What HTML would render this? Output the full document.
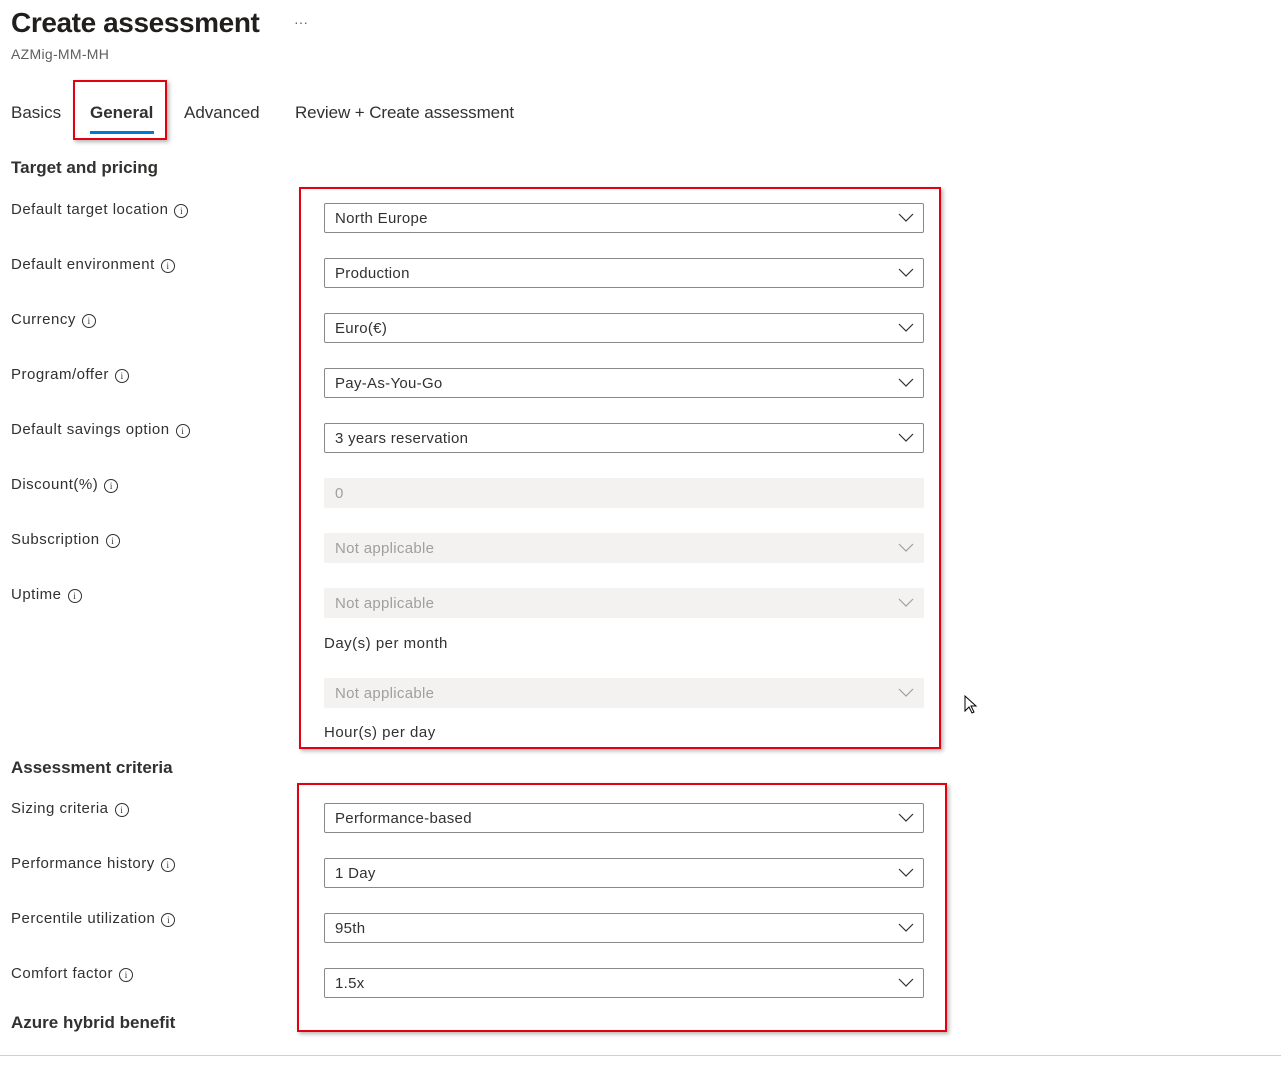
<!DOCTYPE html><html><head><style>
body{margin:0;width:1281px;height:1065px;background:#fff;font-family:"Liberation Sans",sans-serif;color:#323130;position:relative;overflow:hidden}
.a{position:absolute;white-space:nowrap}
.lbl{font-size:15px;letter-spacing:0.5px}
.i{display:inline-block;width:12px;height:12px;border:1px solid #323130;border-radius:50%;font-size:9px;line-height:12px;text-align:center;vertical-align:0px;margin-left:6px;font-family:"Liberation Serif",serif;letter-spacing:0}
.dd{position:absolute;left:324px;height:28px;border:1px solid #8a8886;border-radius:2px;font-size:15px;line-height:30px;padding-left:10px;box-sizing:content-box;width:588px;letter-spacing:0.3px}
.dd.dis{border-color:#f3f2f1;background:#f3f2f1;color:#a19f9d}
.dd svg{position:absolute;right:9px;top:9px}
.red{position:absolute;border:2px solid #e3000f;box-shadow:2px 2px 4px rgba(0,0,0,.3)}
h3{margin:0;font-size:17px;font-weight:bold;position:absolute}
</style></head><body>
<div class="a" style="left:11px;top:7px;font-size:28px;color:#201f1e;font-weight:bold;letter-spacing:-0.4px">Create assessment</div>
<div class="a" style="left:294px;top:14px;font-size:14px;color:#605e5c">···</div>
<div class="a" style="left:11px;top:46px;font-size:14px;color:#605e5c;letter-spacing:0.3px">AZMig-MM-MH</div>
<div class="a lbl" style="left:11px;top:103px;font-size:17px;letter-spacing:0">Basics</div>
<div class="a lbl" style="left:90px;top:103px;font-size:17px;font-weight:bold;letter-spacing:0">General</div>
<div style="position:absolute;left:90px;top:131px;width:64px;height:3px;background:#0078d4"></div>
<div class="red" style="left:73px;top:80px;width:90px;height:56px"></div>
<div class="a lbl" style="left:184px;top:103px;font-size:17px;letter-spacing:0">Advanced</div>
<div class="a lbl" style="left:295px;top:103px;font-size:17px;letter-spacing:-0.1px">Review + Create assessment</div>
<h3 style="left:11px;top:158px">Target and pricing</h3>
<div class="a lbl" style="left:11px;top:201px">Default target location<span class="i">i</span></div>
<div class="a lbl" style="left:11px;top:256px">Default environment<span class="i">i</span></div>
<div class="a lbl" style="left:11px;top:311px">Currency<span class="i">i</span></div>
<div class="a lbl" style="left:11px;top:366px">Program/offer<span class="i">i</span></div>
<div class="a lbl" style="left:11px;top:421px">Default savings option<span class="i">i</span></div>
<div class="a lbl" style="left:11px;top:476px">Discount(%)<span class="i">i</span></div>
<div class="a lbl" style="left:11px;top:531px">Subscription<span class="i">i</span></div>
<div class="a lbl" style="left:11px;top:586px">Uptime<span class="i">i</span></div>
<div class="red" style="left:299px;top:187px;width:638px;height:558px"></div>
<div class="dd" style="top:203px">North Europe<svg width="16" height="10"><path d="M1 1l7 7 7-7" fill="none" stroke="#323130" stroke-width="1.2"/></svg></div>
<div class="dd" style="top:258px">Production<svg width="16" height="10"><path d="M1 1l7 7 7-7" fill="none" stroke="#323130" stroke-width="1.2"/></svg></div>
<div class="dd" style="top:313px">Euro(€)<svg width="16" height="10"><path d="M1 1l7 7 7-7" fill="none" stroke="#323130" stroke-width="1.2"/></svg></div>
<div class="dd" style="top:368px">Pay-As-You-Go<svg width="16" height="10"><path d="M1 1l7 7 7-7" fill="none" stroke="#323130" stroke-width="1.2"/></svg></div>
<div class="dd" style="top:423px">3 years reservation<svg width="16" height="10"><path d="M1 1l7 7 7-7" fill="none" stroke="#323130" stroke-width="1.2"/></svg></div>
<div class="dd dis" style="top:478px">0</div>
<div class="dd dis" style="top:533px">Not applicable<svg width="16" height="10"><path d="M1 1l7 7 7-7" fill="none" stroke="#a19f9d" stroke-width="1.2"/></svg></div>
<div class="dd dis" style="top:588px">Not applicable<svg width="16" height="10"><path d="M1 1l7 7 7-7" fill="none" stroke="#a19f9d" stroke-width="1.2"/></svg></div>
<div class="a lbl" style="left:324px;top:635px">Day(s) per month</div>
<div class="dd dis" style="top:678px">Not applicable<svg width="16" height="10"><path d="M1 1l7 7 7-7" fill="none" stroke="#a19f9d" stroke-width="1.2"/></svg></div>
<div class="a lbl" style="left:324px;top:724px">Hour(s) per day</div>
<svg class="a" style="left:964px;top:695px" width="14" height="20"><path d="M1 1v15l4-4 3 6 2-1-3-6h5z" fill="#fff" stroke="#000"/></svg>
<h3 style="left:11px;top:758px">Assessment criteria</h3>
<div class="a lbl" style="left:11px;top:800px">Sizing criteria<span class="i">i</span></div>
<div class="a lbl" style="left:11px;top:855px">Performance history<span class="i">i</span></div>
<div class="a lbl" style="left:11px;top:910px">Percentile utilization<span class="i">i</span></div>
<div class="a lbl" style="left:11px;top:965px">Comfort factor<span class="i">i</span></div>
<h3 style="left:11px;top:1013px">Azure hybrid benefit</h3>
<div class="red" style="left:297px;top:783px;width:646px;height:245px"></div>
<div class="dd" style="top:803px">Performance-based<svg width="16" height="10"><path d="M1 1l7 7 7-7" fill="none" stroke="#323130" stroke-width="1.2"/></svg></div>
<div class="dd" style="top:858px">1 Day<svg width="16" height="10"><path d="M1 1l7 7 7-7" fill="none" stroke="#323130" stroke-width="1.2"/></svg></div>
<div class="dd" style="top:913px">95th<svg width="16" height="10"><path d="M1 1l7 7 7-7" fill="none" stroke="#323130" stroke-width="1.2"/></svg></div>
<div class="dd" style="top:968px">1.5x<svg width="16" height="10"><path d="M1 1l7 7 7-7" fill="none" stroke="#323130" stroke-width="1.2"/></svg></div>
<div style="position:absolute;left:0;top:1055px;width:1281px;height:1px;background:#d2d0ce"></div>
</body></html>
